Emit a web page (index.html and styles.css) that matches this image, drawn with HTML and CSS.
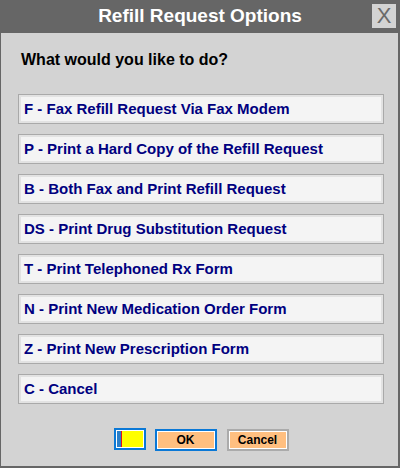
FILE: index.html
```html
<!DOCTYPE html>
<html>
<head>
<meta charset="utf-8">
<link rel="stylesheet" href="styles.css">
</head>
<body>
<div class="window">
  <div class="titlebar">
    <span class="title">Refill Request Options</span>
    <span class="close">X</span>
  </div>
  <div class="content">
    <div class="question">What would you like to do?</div>
    <div class="options">
      <div class="opt">F - Fax Refill Request Via Fax Modem</div>
      <div class="opt">P - Print a Hard Copy of the Refill Request</div>
      <div class="opt">B - Both Fax and Print Refill Request</div>
      <div class="opt">DS - Print Drug Substitution Request</div>
      <div class="opt">T - Print Telephoned Rx Form</div>
      <div class="opt">N - Print New Medication Order Form</div>
      <div class="opt">Z - Print New Prescription Form</div>
      <div class="opt">C - Cancel</div>
    </div>
    <div class="actions">
      <div class="swatch"><span class="sw-blue"></span><span class="sw-red"></span></div>
      <div class="btn ok">OK</div>
      <div class="btn cancel">Cancel</div>
    </div>
  </div>
</div>
</body>
</html>
```
FILE: styles.css
```css
html, body {
  margin: 0;
  padding: 0;
  background: #d3d3d3;
}
.window {
  width: 400px;
  height: 468px;
  box-sizing: border-box;
  border-left: 1px solid #666;
  border-right: 2px solid #666;
  border-bottom: 2px solid #666;
  background: #d3d3d3;
  font-family: "Liberation Sans", Arial, sans-serif;
  display: flex;
  flex-direction: column;
}
.titlebar {
  height: 33px;
  margin-left: -1px;
  margin-right: -2px;
  background: #666;
  position: relative;
  display: flex;
  align-items: center;
  justify-content: center;
}
.title {
  color: #fff;
  font-weight: bold;
  font-size: 19px;
  margin-top: -1px;
}
.close {
  position: absolute;
  left: 372px;
  top: 4px;
  width: 24px;
  height: 24px;
  background: #d3d3d3;
  color: #6a6a6a;
  font-size: 22px;
  line-height: 24px;
  text-align: center;
}
.content {
  padding: 0 14px 0 17px;
  display: flex;
  flex-direction: column;
}
.question {
  font-weight: bold;
  font-size: 16px;
  color: #000;
  margin: 18px 0 0 3px;
  height: 18px;
  line-height: 18px;
}
.options {
  margin-top: 25px;
  display: flex;
  flex-direction: column;
  gap: 10px;
}
.opt {
  height: 30px;
  box-sizing: border-box;
  border: 1px solid #a9a9a9;
  box-shadow: inset 0 0 0 2px #e2e2e2;
  background: #f4f4f4;
  color: #000080;
  font-weight: bold;
  font-size: 15px;
  line-height: 28px;
  padding-left: 5px;
}
.actions {
  margin-top: 25px;
  display: flex;
  justify-content: center;
  align-items: flex-start;
  gap: 9px;
}
.swatch {
  width: 32px;
  height: 22px;
  box-sizing: border-box;
  border: 2px solid #0a78d6;
  box-shadow: inset 0 0 0 1px #fff;
  background: #ffff00;
  margin-top: -1px;
  display: flex;
  padding: 1px;
}
.sw-blue {
  width: 4px;
  height: 100%;
  background: #2a7fc9;
}
.sw-red {
  width: 1px;
  height: 100%;
  background: #e01020;
}
.btn {
  width: 62px;
  height: 22px;
  box-sizing: border-box;
  background: #ffbf80;
  box-shadow: inset 0 0 0 1px #fff;
  font-weight: bold;
  font-size: 12px;
  color: #000;
  text-align: center;
  line-height: 18px;
}
.ok {
  border: 2px solid #0a78d6;
}
.cancel {
  border: 2px solid #ababab;
  margin-left: 1px;
}
```
